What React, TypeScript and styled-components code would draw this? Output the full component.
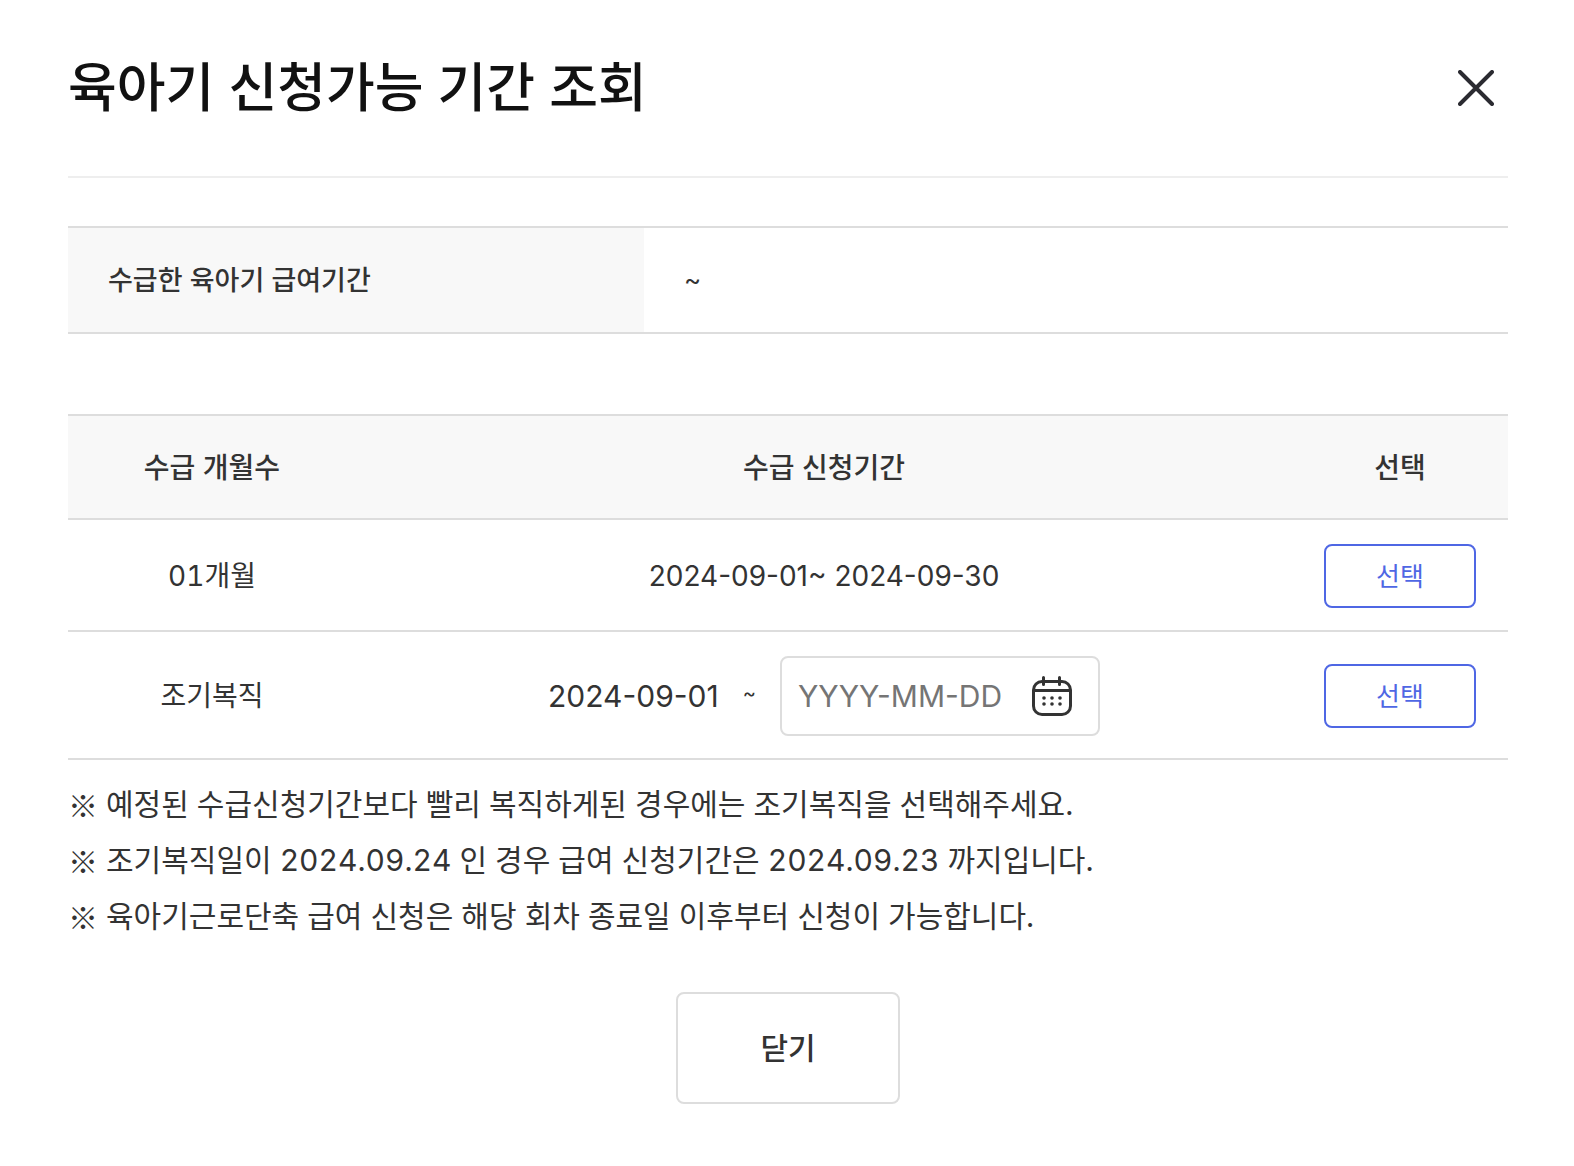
import React, { useState } from "react";
import styled, { createGlobalStyle } from "styled-components";

const GlobalStyle = createGlobalStyle`
  *, *::before, *::after { box-sizing: border-box; }
  body {
    margin: 0;
    background: #fff;
    color: #333;
    font-family: Inter, "Noto Sans CJK KR", sans-serif;
    font-size: 28px;
    line-height: 40px;
  }
  button, input { font-family: inherit; color: inherit; }
`;

const Dialog = styled.main`
  padding: 56px 66px 62px 68px;
`;

const Header = styled.header`
  display: flex;
  align-items: flex-start;
  justify-content: space-between;
  height: 122px;
  border-bottom: 2px solid #eee;
`;

const Title = styled.h1`
  margin: 0;
  color: #111;
  font-size: 53px;
  font-weight: 500;
  line-height: 64px;
`;

const IconButton = styled.button`
  display: grid;
  place-items: center;
  width: 64px;
  height: 64px;
  padding: 0;
  border: 0;
  background: none;
  cursor: pointer;
`;

const Table = styled.table`
  width: 100%;
  table-layout: fixed;
  border-spacing: 0;
  border-top: 2px solid #ddd;
`;

const SummaryTable = styled(Table)`
  margin: 48px 0 80px;
`;

const HeadCell = styled.th<{ $width?: string; $align?: string }>`
  width: ${(p) => p.$width ?? "auto"};
  height: 104px;
  padding: 2px 40px 0;
  border-bottom: 2px solid #ddd;
  background: #f8f8f8;
  font-weight: 500;
  text-align: ${(p) => p.$align ?? "center"};
`;

const LabelCell = styled(HeadCell)`
  height: 106px;
  font-size: 27px;
`;

const ValueCell = styled.td`
  padding: 0 40px;
  border-bottom: 2px solid #ddd;
  font-size: 26px;
`;

const Cell = styled.td`
  padding: 24px 32px 22px;
  border-bottom: 2px solid #ddd;
  text-align: center;
`;

const MonthCell = styled(Cell)`
  font-variant-numeric: tabular-nums;
`;

const Range = styled.div`
  display: flex;
  align-items: center;
  justify-content: center;
  gap: 24px;
  font-size: 30px;
`;

const Tilde = styled.span`
  padding-bottom: 6px;
  font-size: 20px;
`;

const DateBox = styled.div`
  display: flex;
  align-items: center;
  justify-content: space-between;
  width: 320px;
  height: 80px;
  padding: 0 14px 0 16px;
  border: 2px solid #ddd;
  border-radius: 8px;
`;

const DateInput = styled.input`
  flex: 1;
  min-width: 0;
  height: 64px;
  padding: 0;
  border: 0;
  outline: 0;
  background: none;
  font-size: 30px;
  &::placeholder { color: #757575; opacity: 1; }
`;

const SelectButton = styled.button`
  display: block;
  width: 100%;
  height: 64px;
  padding: 0 0 4px;
  border: 2px solid #4f67e4;
  border-radius: 8px;
  background: #fff;
  color: #4f67e4;
  font-size: 26px;
  cursor: pointer;
`;

const Notes = styled.ul`
  margin: 0;
  padding: 16px 0 48px;
  list-style: none;
  font-size: 30px;
  font-variant-numeric: tabular-nums;
  line-height: 56px;
`;

const Note = styled.li`
  display: flex;
  gap: 8px;
`;

const Mark = styled.span`
  flex: none;
  font-family: "Noto Sans CJK KR", sans-serif;
`;

const Footer = styled.footer`
  display: flex;
  justify-content: center;
`;

const CloseButton = styled.button`
  width: 224px;
  height: 112px;
  padding: 0 0 4px;
  border: 2px solid #ddd;
  border-radius: 8px;
  background: #fff;
  font-size: 30px;
  font-weight: 500;
  cursor: pointer;
`;

const CloseIcon = () => (
  <svg width="36" height="36" viewBox="0 0 36 36" fill="none" stroke="#2b2b31" strokeWidth="4" strokeLinecap="round" aria-hidden="true">
    <path d="M2 2 34 34M34 2 2 34" />
  </svg>
);

const CalendarIcon = () => (
  <svg width="40" height="40" viewBox="0 0 40 40" fill="none" stroke="#333" strokeWidth="3" aria-hidden="true">
    <rect x="1.5" y="5.5" width="37" height="33" rx="8.5" />
    <path d="M2 14.5H38" />
    <path d="M11.5 1.5V8.5M27.5 1.5V8.5" strokeLinecap="round" />
    <g fill="#333" stroke="none">
      {[12, 20, 28].map((x) => (
        <React.Fragment key={x}>
          <circle cx={x} cy="22" r="1.8" />
          <circle cx={x} cy="28" r="1.8" />
        </React.Fragment>
      ))}
    </g>
  </svg>
);

const notes = [
  "예정된 수급신청기간보다 빨리 복직하게된 경우에는 조기복직을 선택해주세요.",
  "조기복직일이 2024.09.24 인 경우 급여 신청기간은 2024.09.23 까지입니다.",
  "육아기근로단축 급여 신청은 해당 회차 종료일 이후부터 신청이 가능합니다.",
];

export default function App() {
  const [endDate, setEndDate] = useState("");
  return (
    <>
      <GlobalStyle />
      <Dialog>
        <Header>
          <Title>육아기 신청가능 기간 조회</Title>
          <IconButton type="button" aria-label="닫기">
            <CloseIcon />
          </IconButton>
        </Header>

        <SummaryTable>
          <tbody>
            <tr>
              <LabelCell scope="row" $width="40%" $align="left">수급한 육아기 급여기간</LabelCell>
              <ValueCell>~</ValueCell>
            </tr>
          </tbody>
        </SummaryTable>

        <Table>
          <thead>
            <tr>
              <HeadCell scope="col" $width="20%">수급 개월수</HeadCell>
              <HeadCell scope="col">수급 신청기간</HeadCell>
              <HeadCell scope="col" $width="15%">선택</HeadCell>
            </tr>
          </thead>
          <tbody>
            <tr>
              <MonthCell>01개월</MonthCell>
              <Cell>2024-09-01~ 2024-09-30</Cell>
              <Cell><SelectButton type="button">선택</SelectButton></Cell>
            </tr>
            <tr>
              <MonthCell>조기복직</MonthCell>
              <Cell>
                <Range>
                  <span>2024-09-01</span>
                  <Tilde>~</Tilde>
                  <DateBox>
                    <DateInput
                      type="text"
                      aria-label="조기복직 종료일"
                      placeholder="YYYY-MM-DD"
                      value={endDate}
                      onChange={(e) => setEndDate(e.target.value)}
                    />
                    <IconButton type="button" aria-label="달력 열기">
                      <CalendarIcon />
                    </IconButton>
                  </DateBox>
                </Range>
              </Cell>
              <Cell><SelectButton type="button">선택</SelectButton></Cell>
            </tr>
          </tbody>
        </Table>

        <Notes>
          {notes.map((note) => (
            <Note key={note}>
              <Mark>※</Mark>
              <span>{note}</span>
            </Note>
          ))}
        </Notes>

        <Footer>
          <CloseButton type="button">닫기</CloseButton>
        </Footer>
      </Dialog>
    </>
  );
}
